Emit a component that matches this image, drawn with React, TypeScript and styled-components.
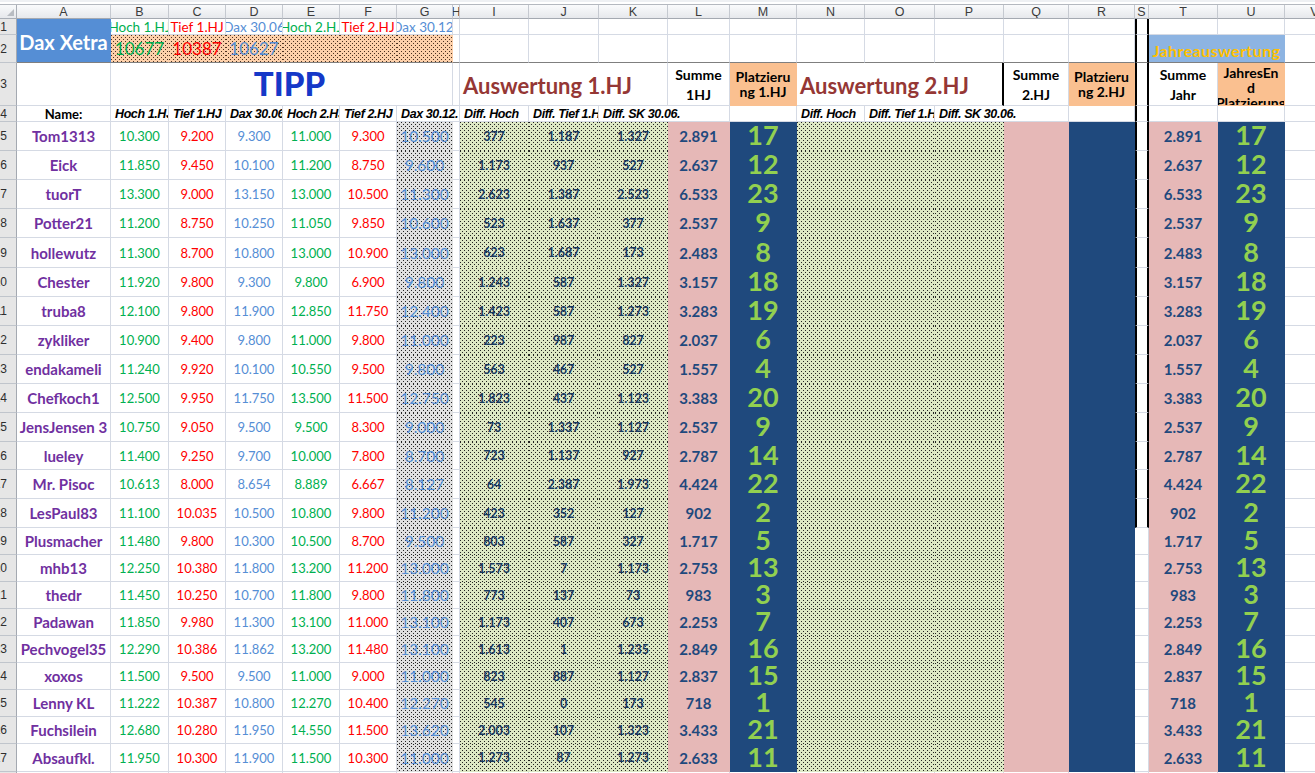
import React from 'react'
import styled, { createGlobalStyle, css } from 'styled-components'

const GRID = '#d5dae4'
const PURPLE = '#7030a0'
const GREEN = '#00b050'
const RED = '#ff0000'
const BLUE = '#558ed5'
const NAVY = '#1f497d'
const INK = '#17375e'
const LIME = '#92d050'

const GlobalStyle = createGlobalStyle`
  html, body {
    margin: 0;
    padding: 0;
    background: #fff;
    overflow: hidden;
  }
  body {
    font-family: Lato, 'Liberation Sans', sans-serif;
  }
`

const letters = 'ABCDEFGHIJKLMNOPQRSTUV'.split('')
const colWidths = [17, 94, 58, 57, 57, 57, 57, 56, 7, 69, 70, 69, 62, 67, 68, 70, 69, 65, 66, 14, 69, 67, 60]
const rowHeights = [
  16, 28, 43, 16,
  29, 29, 29, 29, 30, 29, 29, 29, 29, 29, 29, 28, 29, 29,
  27, 27, 27, 27, 27, 27, 27, 27, 28, 24,
]

type Tone = 'green' | 'red' | 'blue'
const tones: Record<Tone, string> = { green: GREEN, red: RED, blue: BLUE }

// name, B..G tips, I..K diffs, L sum, M rank
type Player = [string, string, string, string, string, string, string, string, string, string, string, number]

const players: Player[] = [
  ['Tom1313', '10.300', '9.200', '9.300', '11.000', '9.300', '10.500', '377', '1.187', '1.327', '2.891', 17],
  ['Eick', '11.850', '9.450', '10.100', '11.200', '8.750', '9.600', '1.173', '937', '527', '2.637', 12],
  ['tuorT', '13.300', '9.000', '13.150', '13.000', '10.500', '11.300', '2.623', '1.387', '2.523', '6.533', 23],
  ['Potter21', '11.200', '8.750', '10.250', '11.050', '9.850', '10.600', '523', '1.637', '377', '2.537', 9],
  ['hollewutz', '11.300', '8.700', '10.800', '13.000', '10.900', '13.000', '623', '1.687', '173', '2.483', 8],
  ['Chester', '11.920', '9.800', '9.300', '9.800', '6.900', '9.800', '1.243', '587', '1.327', '3.157', 18],
  ['truba8', '12.100', '9.800', '11.900', '12.850', '11.750', '12.400', '1.423', '587', '1.273', '3.283', 19],
  ['zykliker', '10.900', '9.400', '9.800', '11.000', '9.800', '11.000', '223', '987', '827', '2.037', 6],
  ['endakameli', '11.240', '9.920', '10.100', '10.550', '9.500', '9.800', '563', '467', '527', '1.557', 4],
  ['Chefkoch1', '12.500', '9.950', '11.750', '13.500', '11.500', '12.750', '1.823', '437', '1.123', '3.383', 20],
  ['JensJensen 3', '10.750', '9.050', '9.500', '9.500', '8.300', '9.000', '73', '1.337', '1.127', '2.537', 9],
  ['lueley', '11.400', '9.250', '9.700', '10.000', '7.800', '8.700', '723', '1.137', '927', '2.787', 14],
  ['Mr. Pisoc', '10.613', '8.000', '8.654', '8.889', '6.667', '8.127', '64', '2.387', '1.973', '4.424', 22],
  ['LesPaul83', '11.100', '10.035', '10.500', '10.800', '9.800', '11.200', '423', '352', '127', '902', 2],
  ['Plusmacher', '11.480', '9.800', '10.300', '10.500', '8.700', '9.500', '803', '587', '327', '1.717', 5],
  ['mhb13', '12.250', '10.380', '11.800', '13.200', '11.200', '13.000', '1.573', '7', '1.173', '2.753', 13],
  ['thedr', '11.450', '10.250', '10.700', '11.800', '9.800', '11.800', '773', '137', '73', '983', 3],
  ['Padawan', '11.850', '9.980', '11.300', '13.100', '11.000', '13.100', '1.173', '407', '673', '2.253', 7],
  ['Pechvogel35', '12.290', '10.386', '11.862', '13.200', '11.480', '13.100', '1.613', '1', '1.235', '2.849', 16],
  ['xoxos', '11.500', '9.500', '9.500', '11.000', '9.000', '11.000', '823', '887', '1.127', '2.837', 15],
  ['Lenny KL', '11.222', '10.387', '10.800', '12.270', '10.400', '12.270', '545', '0', '173', '718', 1],
  ['Fuchsilein', '12.680', '10.280', '11.950', '14.550', '11.500', '13.620', '2.003', '107', '1.323', '3.433', 21],
  ['Absaufkl.', '11.950', '10.300', '11.900', '11.500', '10.300', '11.000', '1.273', '87', '1.273', '2.633', 11],
]

const tipTones: Tone[] = ['green', 'red', 'blue', 'green', 'red']

const dots = (base: string, ink = '#222') => css`
  background-color: ${base};
  background-image: conic-gradient(at 1px 1px, transparent 75%, ${ink} 0),
    conic-gradient(at 1px 1px, transparent 75%, ${ink} 0);
  background-size: 4px 4px;
  background-position: 0 0, 2px 2px;
`

type Fill = 'plain' | 'pink' | 'navy' | 'peach' | 'xetra' | 'sky' | 'grayDots' | 'greenDots' | 'peachDots'

const solid = (c: string) => css`
  background-color: ${c};
`

const fills: Record<Fill, ReturnType<typeof css> | null> = {
  plain: null,
  pink: solid('#e6b8b7'),
  navy: solid(NAVY),
  peach: solid('#fac090'),
  xetra: solid('#558ed5'),
  sky: solid('#8db4e2'),
  grayDots: dots('#e0e0e0'),
  greenDots: dots('#dde8c4'),
  peachDots: dots('#fdd0aa', '#4a3020'),
}

interface CellProps {
  $fill?: Fill
  $span?: number
  $rows?: number
  $h?: 'flex-start' | 'center' | 'flex-end'
  $v?: 'flex-start' | 'center' | 'flex-end'
  $freeze?: boolean
  $wall?: boolean
  $edge?: boolean
}

const Cell = styled.div<CellProps>`
  box-sizing: border-box;
  display: flex;
  justify-content: ${(p) => p.$h ?? 'center'};
  align-items: ${(p) => p.$v ?? 'center'};
  min-width: 0;
  overflow: hidden;
  white-space: nowrap;
  border-right: 1px solid ${GRID};
  border-bottom: 1px solid ${GRID};
  grid-column: span ${(p) => p.$span ?? 1};
  grid-row: span ${(p) => p.$rows ?? 1};
  ${(p) =>
    p.$fill && p.$fill !== 'plain'
      ? css`
          ${fills[p.$fill]}
          border-right-color: transparent;
          border-bottom-color: transparent;
        `
      : null}
  ${(p) =>
    p.$freeze &&
    css`
      border-bottom-color: #7f7f7f;
    `}
  ${(p) =>
    p.$wall &&
    css`
      border-left: 2px solid #000;
      border-right: 2px solid #000;
    `}
  ${(p) =>
    p.$edge &&
    css`
      border-right: 2px solid #000;
    `}
`

const Sheet = styled.div`
  display: grid;
  grid-template-columns: ${colWidths.map((w) => `${w}px`).join(' ')};
  grid-template-rows: 5px 14px ${rowHeights.map((h) => `${h}px`).join(' ')};
  width: max-content;
`

const TopStrip = styled.div`
  grid-column: 1 / -1;
  box-sizing: border-box;
  background: #fff;
  border-top: 2px solid #eef0f3;
  border-bottom: 1px solid #b4b8bf;
`

const Corner = styled.div`
  position: relative;
  box-sizing: border-box;
  background: linear-gradient(#f9fafb, #e6e8ec);
  border-right: 1px solid #a9aeb6;
  border-bottom: 1px solid #a9aeb6;
  &::after {
    content: '';
    position: absolute;
    right: 2px;
    bottom: 2px;
    border-left: 7px solid transparent;
    border-bottom: 7px solid #b8bcc2;
  }
`

const ColHead = styled.div`
  box-sizing: border-box;
  display: flex;
  align-items: center;
  justify-content: center;
  overflow: hidden;
  font: 12.5px 'Liberation Sans', Arial, sans-serif;
  color: #3c3c3c;
  background: linear-gradient(#fafbfc, #e6e8ec);
  border-right: 1px solid #c5c9d0;
  border-bottom: 1px solid #a4a9b1;
`

const RowHead = styled.div`
  box-sizing: border-box;
  display: flex;
  align-items: center;
  justify-content: flex-end;
  padding-right: 9px;
  overflow: hidden;
  white-space: nowrap;
  font: 12px 'Liberation Sans', Arial, sans-serif;
  color: #2e2e2e;
  background: #e6e6e6;
  border-right: 1px solid #a4a9b1;
  border-bottom: 1px solid #c0c5cc;
`

const XetraCell = styled(Cell)`
  color: #fff;
  font-size: 20px;
  font-weight: 700;
  padding-top: 2px;
`

const HeadLabel = styled(Cell)<{ $tone: Tone }>`
  font-size: 13.5px;
  color: ${(p) => tones[p.$tone]};
`

const IndexValue = styled(Cell)<{ $tone: Tone }>`
  font-size: 17px;
  line-height: 1;
  padding-bottom: 5px;
  color: ${(p) => tones[p.$tone]};
`

const YearBanner = styled(Cell)`
  font-size: 16px;
  font-weight: 700;
  letter-spacing: 0.4px;
  color: #ffc000;
  padding-bottom: 2px;
`

const TippCell = styled(Cell)`
  font-size: 33px;
  font-weight: 900;
  color: #1538c8;
  padding: 0 0 2px 16px;
`

const SectionTitle = styled(Cell)`
  font-size: 22px;
  font-weight: 700;
  color: #953735;
  padding: 0 0 6px 3px;
`

const StackCell = styled(Cell)<{ $gap?: number; $top?: boolean }>`
  flex-direction: column;
  justify-content: ${(p) => (p.$top ? 'flex-start' : 'center')};
  align-items: center;
  gap: ${(p) => p.$gap ?? 0}px;
  padding-top: ${(p) => (p.$top ? 2 : 0)}px;
  font-size: 14px;
  font-weight: 700;
  line-height: 15px;
  color: #000;
`

const LabelCell = styled(Cell)`
  font-size: 13px;
  font-weight: 700;
  color: #000;
`

const ColumnLabel = styled(Cell)`
  padding-left: 4px;
  font: italic 700 12.5px 'Liberation Sans', Arial, sans-serif;
  letter-spacing: -0.4px;
  color: #000;
`

const NameCell = styled(Cell)`
  font-size: 15px;
  font-weight: 700;
  color: ${PURPLE};
`

const TipValue = styled(Cell)<{ $tone: Tone }>`
  font-size: 13px;
  color: ${(p) => tones[p.$tone]};
`

const CloseValue = styled(Cell)`
  font-size: 15.5px;
  color: ${BLUE};
`

const DiffValue = styled(Cell)`
  font-size: 12.5px;
  font-weight: 700;
  color: ${INK};
`

const SumValue = styled(Cell)`
  font-size: 15px;
  font-weight: 700;
  color: ${NAVY};
`

const RankValue = styled(Cell)`
  font-size: 27px;
  font-weight: 700;
  line-height: 21px;
  color: ${LIME};
  padding-bottom: 3px;
`

function HeaderRows() {
  return (
    <>
      <TopStrip />
      <Corner />
      {letters.map((l) => (
        <ColHead key={l}>{l}</ColHead>
      ))}

      {/* row 1 */}
      <RowHead>1</RowHead>
      <XetraCell $fill="xetra" $rows={2} $freeze>
        Dax Xetra
      </XetraCell>
      <HeadLabel $tone="green">Hoch 1.HJ</HeadLabel>
      <HeadLabel $tone="red">Tief 1.HJ</HeadLabel>
      <HeadLabel $tone="blue">Dax 30.06</HeadLabel>
      <HeadLabel $tone="green">Hoch 2.HJ</HeadLabel>
      <HeadLabel $tone="red">Tief 2.HJ</HeadLabel>
      <HeadLabel $tone="blue">Dax 30.12.</HeadLabel>
      {'HIJKLMNOPQR'.split('').map((c) => (
        <Cell key={`1${c}`} />
      ))}
      <Cell $wall />
      <Cell />
      <Cell />
      <Cell />

      {/* row 2 */}
      <RowHead>2</RowHead>
      <IndexValue $tone="green" $fill="peachDots" $v="flex-end" $freeze>
        10677
      </IndexValue>
      <IndexValue $tone="red" $fill="peachDots" $v="flex-end" $freeze>
        10387
      </IndexValue>
      <IndexValue $tone="blue" $fill="peachDots" $v="flex-end" $freeze>
        10627
      </IndexValue>
      <Cell $fill="peachDots" $freeze />
      <Cell $fill="peachDots" $freeze />
      <Cell $fill="peachDots" $freeze />
      {'HIJKLMNOPQR'.split('').map((c) => (
        <Cell key={`2${c}`} $freeze />
      ))}
      <Cell $wall $freeze />
      <YearBanner $fill="sky" $span={2} $v="flex-end" $freeze>
        Jahreauswertung
      </YearBanner>
      <Cell $freeze />

      {/* row 3 */}
      <RowHead>3</RowHead>
      <Cell />
      <TippCell $span={6} $v="flex-end">
        TIPP
      </TippCell>
      <Cell />
      <SectionTitle $span={3} $h="flex-start" $v="flex-end">
        Auswertung 1.HJ
      </SectionTitle>
      <StackCell $gap={5}>
        <span>Summe</span>
        <span>1HJ</span>
      </StackCell>
      <StackCell $fill="peach">
        <span>Platzieru</span>
        <span>ng 1.HJ</span>
      </StackCell>
      <SectionTitle $span={3} $h="flex-start" $v="flex-end" $edge>
        Auswertung 2.HJ
      </SectionTitle>
      <StackCell $gap={5}>
        <span>Summe</span>
        <span>2.HJ</span>
      </StackCell>
      <StackCell $fill="peach">
        <span>Platzieru</span>
        <span>ng 2.HJ</span>
      </StackCell>
      <Cell $wall />
      <StackCell $gap={5}>
        <span>Summe</span>
        <span>Jahr</span>
      </StackCell>
      <StackCell $fill="peach" $top>
        <span>JahresEn</span>
        <span>d</span>
        <span>Platzierung</span>
      </StackCell>
      <Cell />

      {/* row 4 */}
      <RowHead>4</RowHead>
      <LabelCell>Name:</LabelCell>
      <ColumnLabel $h="flex-start">Hoch 1.HJ</ColumnLabel>
      <ColumnLabel $h="flex-start">Tief 1.HJ</ColumnLabel>
      <ColumnLabel $h="flex-start">Dax 30.06</ColumnLabel>
      <ColumnLabel $h="flex-start">Hoch 2.HJ</ColumnLabel>
      <ColumnLabel $h="flex-start">Tief 2.HJ</ColumnLabel>
      <ColumnLabel $h="flex-start" $span={2}>
        Dax 30.12.
      </ColumnLabel>
      <ColumnLabel $h="flex-start">Diff. Hoch</ColumnLabel>
      <ColumnLabel $h="flex-start">Diff. Tief 1.HJ</ColumnLabel>
      <ColumnLabel $h="flex-start" $span={2}>
        Diff. SK 30.06.
      </ColumnLabel>
      <Cell />
      <ColumnLabel $h="flex-start">Diff. Hoch</ColumnLabel>
      <ColumnLabel $h="flex-start">Diff. Tief 1.HJ</ColumnLabel>
      <ColumnLabel $h="flex-start" $span={2}>
        Diff. SK 30.06.
      </ColumnLabel>
      <Cell />
      <Cell $wall />
      <Cell />
      <Cell />
      <Cell />
    </>
  )
}

function PlayerRow({ player, row }: { player: Player; row: number }) {
  const [name, ...rest] = player
  const tips = rest.slice(0, 5) as string[]
  const close = rest[5] as string
  const diffs = rest.slice(6, 9) as string[]
  const sum = rest[9] as string
  const rank = rest[10] as number
  return (
    <>
      <RowHead>{row}</RowHead>
      <NameCell>{name}</NameCell>
      {tips.map((t, i) => (
        <TipValue key={i} $tone={tipTones[i]}>
          {t}
        </TipValue>
      ))}
      <CloseValue $fill="grayDots">{close}</CloseValue>
      <Cell />
      {diffs.map((d, i) => (
        <DiffValue key={i} $fill="greenDots">
          {d}
        </DiffValue>
      ))}
      <SumValue $fill="pink">{sum}</SumValue>
      <RankValue $fill="navy">{rank}</RankValue>
      <Cell $fill="greenDots" />
      <Cell $fill="greenDots" />
      <Cell $fill="greenDots" />
      <Cell $fill="pink" />
      <Cell $fill="navy" />
      <Cell $wall={row <= 18} />
      <SumValue $fill="pink">{sum}</SumValue>
      <RankValue $fill="navy">{rank}</RankValue>
      <Cell />
    </>
  )
}

function TrailingRow() {
  return (
    <>
      <RowHead>28</RowHead>
      {letters.map((l) => (
        <Cell key={l} />
      ))}
    </>
  )
}

export default function App() {
  return (
    <>
      <GlobalStyle />
      <Sheet>
        <HeaderRows />
        {players.map((p, i) => (
          <PlayerRow key={p[0]} player={p} row={i + 5} />
        ))}
        <TrailingRow />
      </Sheet>
    </>
  )
}
